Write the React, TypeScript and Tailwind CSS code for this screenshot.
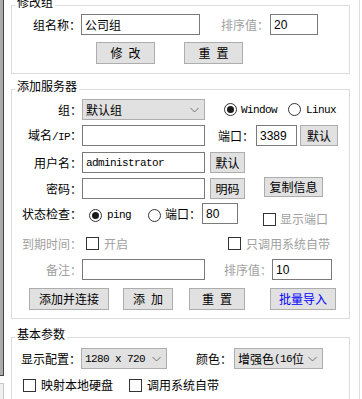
import type { ReactNode } from 'react';

const MONO = "font-['Liberation_Mono','Noto_Sans_CJK_SC',monospace] text-[11px] tracking-[-0.6px]";
const NUM = "font-['Liberation_Sans',sans-serif] text-[12px]";

function Field({ w, children }: { w: string; children?: ReactNode }) {
  return (
    <div className={`${w} h-[21px] shrink-0 border border-[#7a7a7a] bg-white flex items-center pl-[3px]`}>
      {children}
    </div>
  );
}

function Btn({ w, children, blue }: { w: string; children: ReactNode; blue?: boolean }) {
  return (
    <div
      className={`${w} h-full shrink-0 border border-[#adadad] bg-[#e1e1e1] flex items-center justify-center gap-[6px] whitespace-nowrap ${
        blue ? 'text-[#0000ff]' : 'text-black'
      }`}
    >
      {children}
    </div>
  );
}

function Radio({ checked }: { checked?: boolean }) {
  return (
    <span className="w-[13px] h-[13px] shrink-0 rounded-full border border-[#333333] bg-white flex items-center justify-center">
      {checked && <span className="w-[7px] h-[7px] rounded-full bg-[#1a1a1a]" />}
    </span>
  );
}

function Check() {
  return <span className="block w-[13px] h-[13px] shrink-0 border border-[#333333] bg-white" />;
}

function Chevron() {
  return (
    <svg width="9" height="6" viewBox="0 0 9 6" className="shrink-0">
      <polyline points="0.5,1 4.5,5 8.5,1" fill="none" stroke="#707070" strokeWidth="1" />
    </svg>
  );
}

function Select({ w, children }: { w: string; children: ReactNode }) {
  return (
    <div className={`${w} h-[21px] shrink-0 border border-[#adadad] bg-[#e1e1e1] flex items-center justify-between pl-[3px] pr-[5px]`}>
      <span className="flex items-center whitespace-nowrap">{children}</span>
      <Chevron />
    </div>
  );
}

function Label({ w = 'w-[70px]', gray, children }: { w?: string; gray?: boolean; children: ReactNode }) {
  return (
    <span className={`${w} shrink-0 text-right whitespace-nowrap ${gray ? 'text-[#a0a0a0]' : 'text-black'}`}>
      {children}
    </span>
  );
}

export default function App() {
  return (
    <div className="w-[362px] h-[399px] overflow-hidden bg-white flex text-[12px] leading-[14px] text-black font-['Noto_Sans_CJK_SC','Noto_Sans',sans-serif]">
      {/* clipped neighbour panel */}
      <div className="w-[4px] shrink-0 flex flex-col">
        <div className="h-[376px] bg-[#ababab] border-r border-b border-[#444444]" />
        <div className="mt-[7px] flex-1 bg-[#f0f0f0] border-r border-t border-[#c8c8c8]" />
      </div>

      <div className="ml-[7px] w-[339px] shrink-0 flex flex-col">
        {/* 修改组 */}
        <fieldset className="-mt-[4px] border border-[#dcdcdc] w-[339px] pb-[9px]">
          <legend className="ml-[3px] px-[2px] leading-[12px] pb-[6px]">修改组</legend>
          <div className="flex items-center h-[21px]">
            <Label w="w-[69px]">组名称：</Label>
            <Field w="w-[119px]">公司组</Field>
            <Label w="w-[48px] ml-[21px]" gray>排序值：</Label>
            <Field w="w-[48px] ml-[1px]">
              <span className={NUM}>20</span>
            </Field>
          </div>
          <div className="flex h-[22px] mt-[7px] pl-[84px]">
            <Btn w="w-[59px]">
              <span>修</span>
              <span>改</span>
            </Btn>
            <div className="ml-[29px] h-full">
              <Btn w="w-[59px]">
                <span>重</span>
                <span>置</span>
              </Btn>
            </div>
          </div>
        </fieldset>

        {/* 添加服务器 */}
        <fieldset className="mt-[6px] border border-[#dcdcdc] w-[339px] pb-[8px]">
          <legend className="ml-[3px] px-[2px] leading-[12px] pb-[6px]">添加服务器</legend>

          <div className="flex items-center h-[21px] mt-[1px]">
            <Label>组：</Label>
            <Select w="w-[123px]">默认组</Select>
            <span className="ml-[19px]"><Radio checked /></span>
            <span className={`ml-[4px] ${MONO}`}>Window</span>
            <span className="ml-[11px]"><Radio /></span>
            <span className={`ml-[5px] ${MONO}`}>Linux</span>
          </div>

          <div className="flex items-center h-[21px] mt-[5px]">
            <Label>
              域名<span className={MONO}>/IP</span>：
            </Label>
            <Field w="w-[123px]" />
            <span className="ml-[13px] w-[36px] shrink-0">端口：</span>
            <Field w="w-[41px] ml-[2px]">
              <span className={NUM}>3389</span>
            </Field>
            <div className="ml-[3px] h-full">
              <Btn w="w-[38px]">默认</Btn>
            </div>
          </div>

          <div className="flex items-center h-[21px] mt-[6px]">
            <Label>用户名：</Label>
            <Field w="w-[123px]">
              <span className={MONO}>administrator</span>
            </Field>
            <div className="ml-[5px] h-full">
              <Btn w="w-[35px]">默认</Btn>
            </div>
          </div>

          <div className="flex items-center h-[21px] mt-[5px]">
            <Label>密码：</Label>
            <Field w="w-[123px]" />
            <div className="ml-[5px] h-full">
              <Btn w="w-[35px]">明码</Btn>
            </div>
            <div className="ml-[19px] h-[20px] self-start -mt-[1px]">
              <Btn w="w-[59px]">复制信息</Btn>
            </div>
          </div>

          <div className="flex items-center h-[21px] mt-[4px]">
            <Label>状态检查：</Label>
            <span className="ml-[7px] mt-[3px]"><Radio checked /></span>
            <span className={`ml-[5px] mt-[3px] ${MONO}`}>ping</span>
            <span className="ml-[17px] mt-[3px]"><Radio /></span>
            <span className="ml-[4px] w-[36px] shrink-0">端口：</span>
            <Field w="w-[36px] ml-[1px]">
              <span className={NUM}>80</span>
            </Field>
            <span className="ml-[25px] mt-[11px] flex items-center">
              <Check />
              <span className="ml-[4px] text-[#a0a0a0]">显示端口</span>
            </span>
          </div>

          <div className="flex items-center h-[21px] mt-[9px]">
            <Label gray>到期时间：</Label>
            <span className="ml-[4px]"><Check /></span>
            <span className="ml-[5px] text-[#a0a0a0]">开启</span>
            <span className="ml-[100px]"><Check /></span>
            <span className="ml-[5px] text-[#a0a0a0]">只调用系统自带</span>
          </div>

          <div className="flex items-center h-[21px] mt-[5px]">
            <Label gray>备注：</Label>
            <Field w="w-[123px]" />
            <Label w="w-[48px] ml-[19px]" gray>排序值：</Label>
            <Field w="w-[60px]">
              <span className={NUM}>10</span>
            </Field>
          </div>

          <div className="flex h-[22px] mt-[8px] pl-[17px]">
            <Btn w="w-[80px]">添加并连接</Btn>
            <div className="ml-[14px] h-full">
              <Btn w="w-[50px]">
                <span>添</span>
                <span>加</span>
              </Btn>
            </div>
            <div className="ml-[16px] h-full">
              <Btn w="w-[56px]">
                <span>重</span>
                <span>置</span>
              </Btn>
            </div>
            <div className="ml-[25px] h-full">
              <Btn w="w-[66px]" blue>批量导入</Btn>
            </div>
          </div>
        </fieldset>

        {/* 基本参数 */}
        <fieldset className="mt-[9px] border border-[#dcdcdc] w-[339px] pb-[8px]">
          <legend className="ml-[3px] px-[2px] leading-[12px] pb-[6px]">基本参数</legend>
          <div className="flex items-center h-[21px] mt-[2px]">
            <Label w="w-[69px]">显示配置：</Label>
            <Select w="w-[86px]">
              <span className={MONO}>1280 x 720</span>
            </Select>
            <span className="ml-[29px] w-[36px] shrink-0">颜色：</span>
            <Select w="w-[89px] ml-[2px]">
              增强色<span className={MONO}>(16</span>位
            </Select>
          </div>
          <div className="flex items-center h-[16px] mt-[8px] pl-[11px]">
            <Check />
            <span className="ml-[5px]">映射本地硬盘</span>
            <span className="ml-[16px]"><Check /></span>
            <span className="ml-[5px]">调用系统自带</span>
          </div>
        </fieldset>
      </div>

      <div className="ml-[9px] w-px shrink-0 bg-[#dcdcdc]" />
    </div>
  );
}
